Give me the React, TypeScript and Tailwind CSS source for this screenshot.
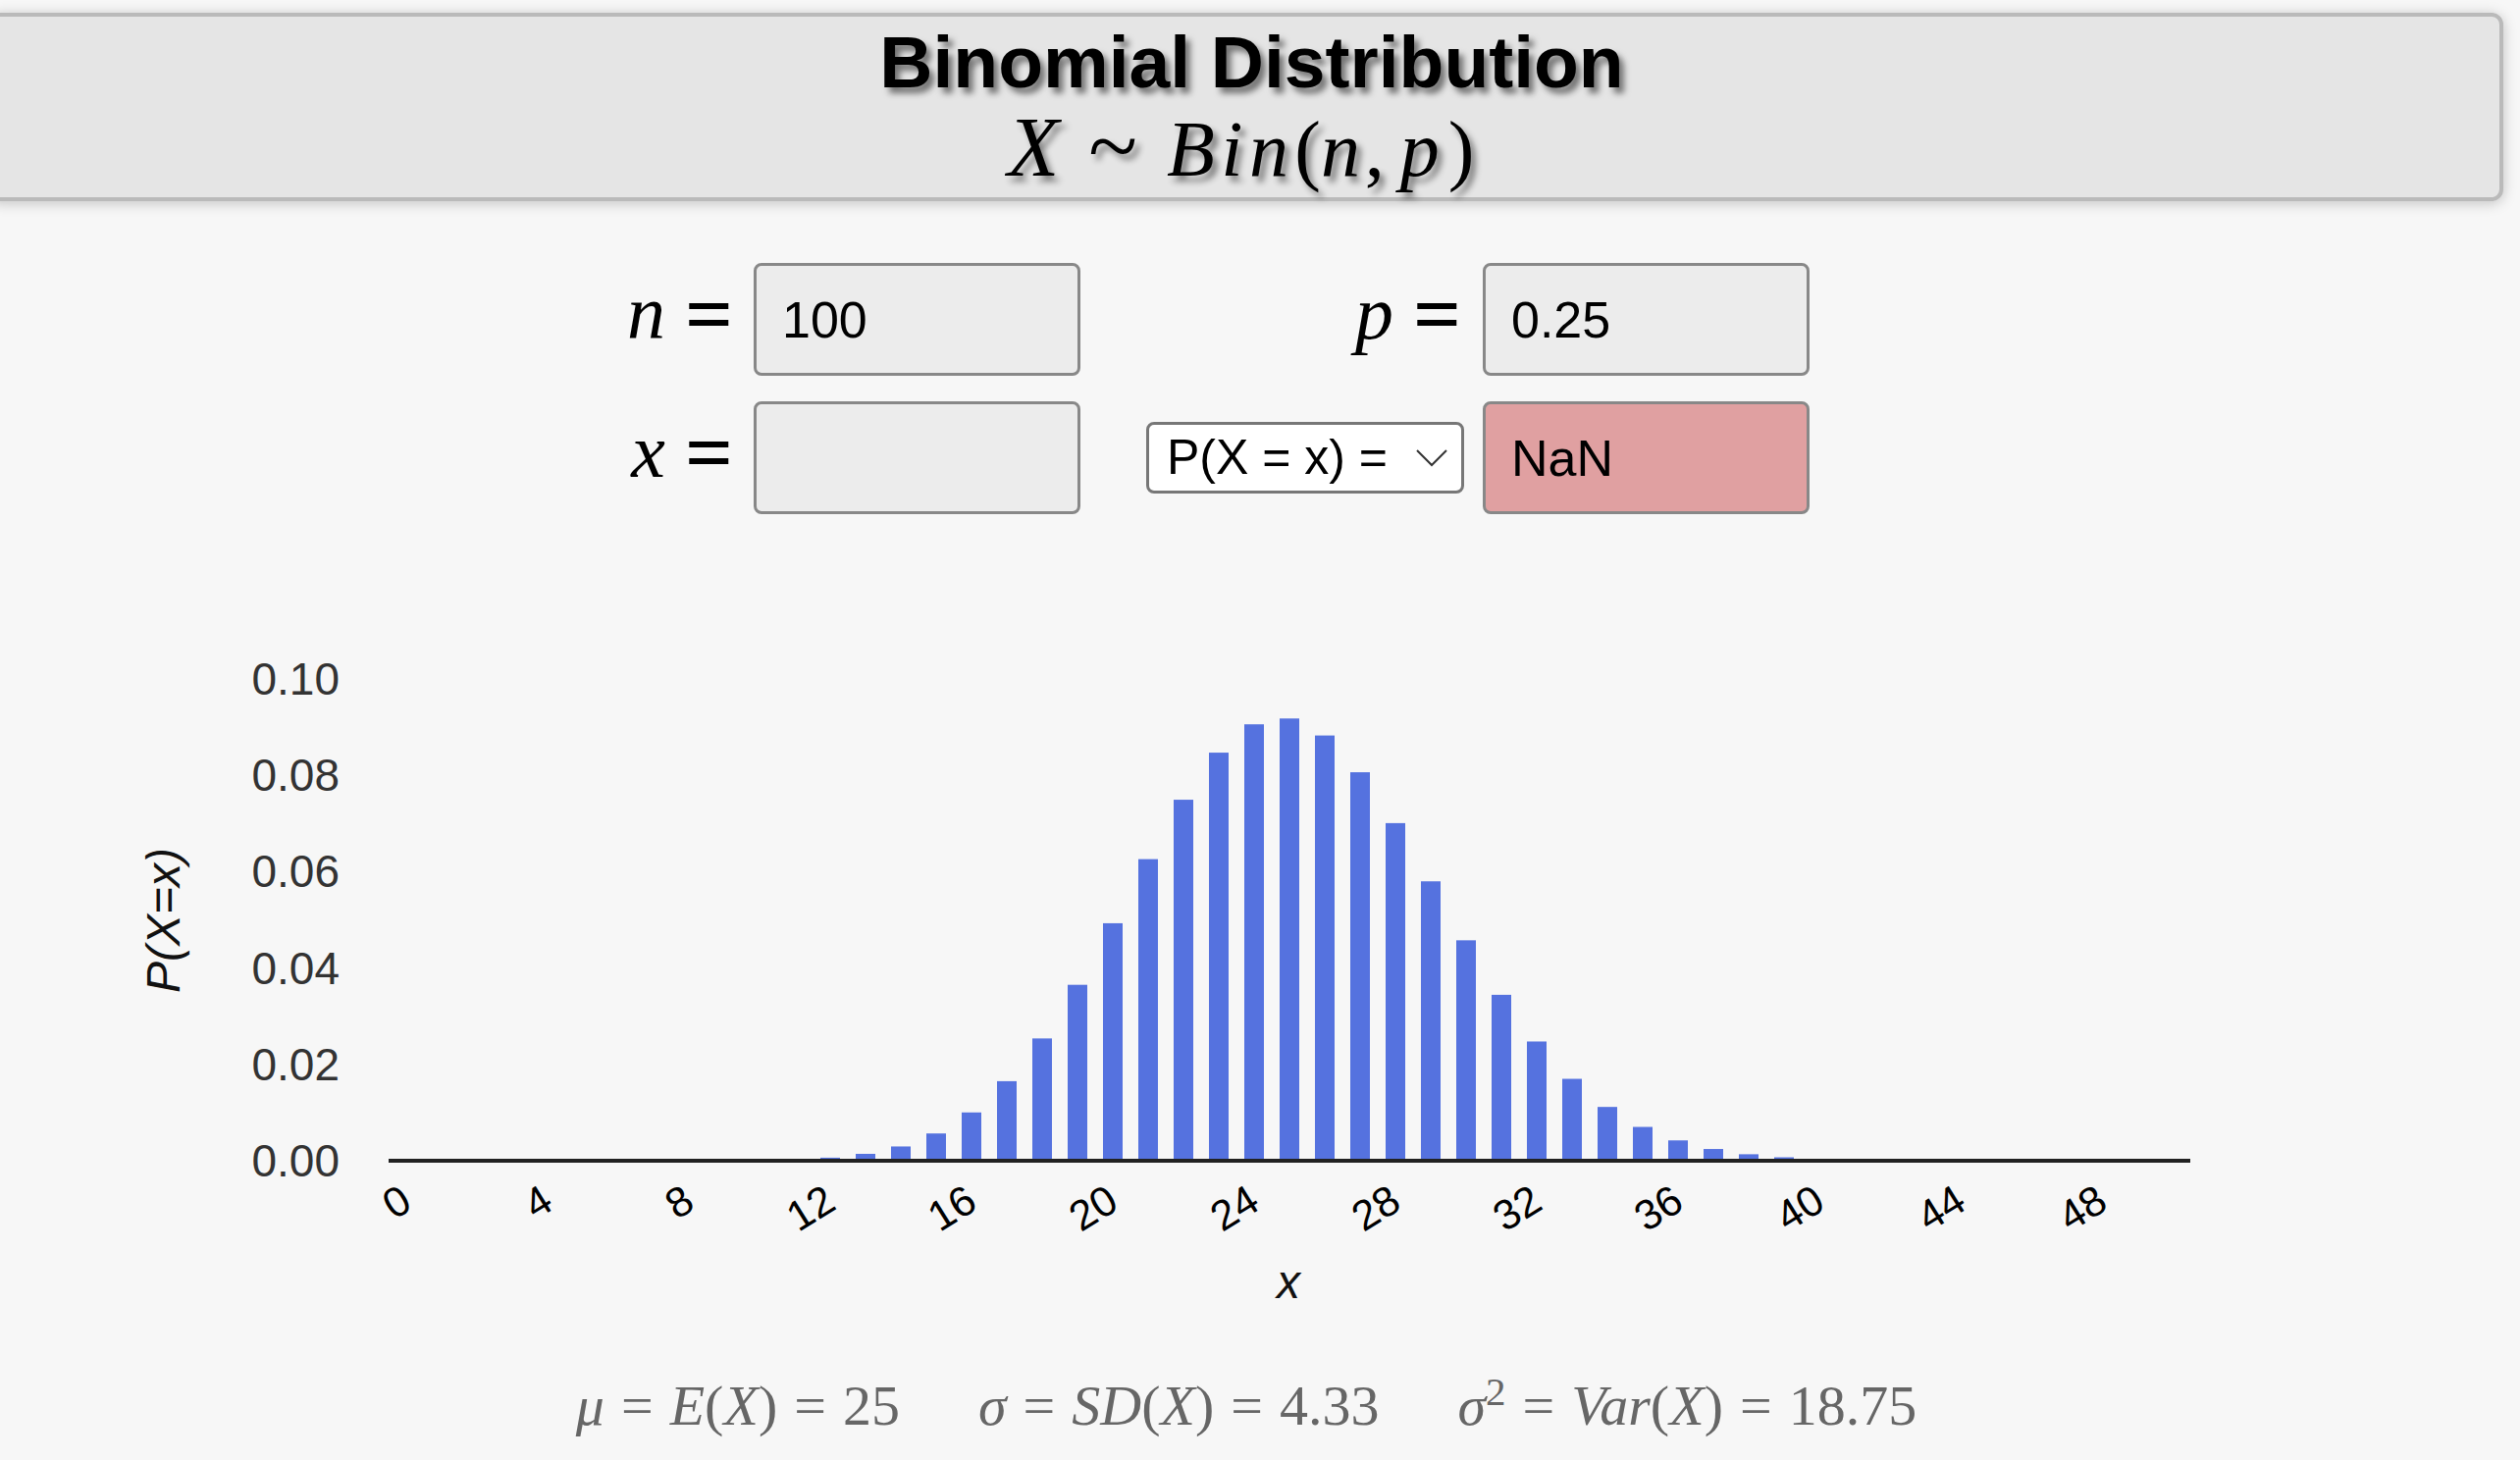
import React from 'react';

const N = 100;
const P = 0.25;

// binomial pmf for the visible x range 0..50
const pmf: number[] = (() => {
  const out: number[] = [];
  let v = Math.pow(1 - P, N);
  for (let k = 0; k <= 50; k++) {
    out.push(v);
    v = v * ((N - k) / (k + 1)) * (P / (1 - P));
  }
  return out;
})();

const mean = N * P;
const variance = N * P * (1 - P);
const sd = Math.sqrt(variance);

// chart geometry (svg coords, svg starts at page y=600)
const X0 = 396;
const BAND = 36;
const BAR_W = 20;
const AXIS_Y = 582;
const Y_SCALE = 4910;

const Eq = () => <span className="mx-[17px] not-italic">=</span>;

const MathLabel = ({ v }: { v: string }) => (
  <div className="flex items-center justify-end pb-[14px] font-['Liberation_Serif',serif] text-[78px] text-black">
    <span className="italic">{v}</span>
    <span className="relative top-[2px] ml-[20px] text-[86px] font-bold">=</span>
  </div>
);

const Field = ({ value, error }: { value: string; error?: boolean }) => (
  <input
    readOnly
    value={value}
    className={`w-[333px] h-[115px] rounded-[8px] border-[3px] border-[#888] pl-[26px] font-['Liberation_Sans',sans-serif] text-[52px] text-black outline-none ${
      error ? 'bg-[#e0a0a1]' : 'bg-[#ececec]'
    }`}
  />
);

const BinomialChart = () => {
  const yTicks = [0, 0.02, 0.04, 0.06, 0.08, 0.1];
  const xTicks = Array.from({ length: 13 }, (_, i) => i * 4);
  return (
    <svg width={2568} height={740} viewBox="0 0 2568 740" className="block mt-[77px]">
      {/* y axis labels */}
      {yTicks.map(t => (
        <text
          key={t}
          x={346}
          y={AXIS_Y - t * Y_SCALE + 16}
          textAnchor="end"
          fontSize={46}
          fill="#333"
          fontFamily="Liberation Sans, sans-serif"
        >
          {t.toFixed(2)}
        </text>
      ))}

      {/* bars */}
      {pmf.map((v, k) => {
        const h = v * Y_SCALE;
        return (
          <rect
            key={k}
            x={X0 + k * BAND + (BAND - BAR_W) / 2}
            y={AXIS_Y - h}
            width={BAR_W}
            height={h}
            fill="#5572df"
          />
        );
      })}

      <line x1={X0} y1={AXIS_Y} x2={2232} y2={AXIS_Y} stroke="#222" strokeWidth={4} />

      {/* x axis labels, rotated */}
      {xTicks.map(t => (
        <text
          key={t}
          transform={`translate(${X0 + t * BAND + BAND / 2 + 8}, 630) rotate(-32)`}
          textAnchor="end"
          fontSize={43}
          fill="#000"
          fontFamily="Liberation Sans, sans-serif"
        >
          {t}
        </text>
      ))}

      <text x={1313} y={722} textAnchor="middle" fontSize={48} fontStyle="italic" fill="#111" fontFamily="Liberation Sans, sans-serif">
        x
      </text>
      <text
        transform="translate(183, 337) rotate(-90)"
        textAnchor="middle"
        fontSize={48}
        fontStyle="italic"
        fill="#111"
        fontFamily="Liberation Sans, sans-serif"
      >
        P(X=x)
      </text>
    </svg>
  );
};

export default function App() {
  return (
    <div className="h-[1488px] overflow-hidden bg-[#f7f7f7] pt-[13px]">
      {/* Header */}
      <header className="-ml-[12px] w-[2563px] h-[192px] rounded-[12px] border-4 border-[#bababa] bg-[#e5e5e5] shadow-[0_2px_14px_rgba(0,0,0,0.22)] pl-[12px] pt-[4px] flex flex-col items-center">
        <h1 className="font-['Liberation_Sans',sans-serif] font-bold text-[75px] leading-[85px] text-black [text-shadow:5px_6px_6px_rgba(0,0,0,0.5)]">
          Binomial Distribution
        </h1>
        <div className="pr-[22px] font-['Liberation_Serif',serif] text-[80px] leading-[85px] text-black [text-shadow:5px_6px_6px_rgba(0,0,0,0.45)]">
          <span className="italic text-[86px]">X</span>
          <span className="mx-[30px] text-[92px]">~</span>
          <span className="italic tracking-[0.08em]">Bin</span>
          <span>(</span>
          <span className="italic tracking-[0.06em]">n</span>
          <span>,</span>
          <span className="ml-[16px] italic tracking-[0.06em]">p</span>
          <span className="ml-[4px]">)</span>
        </div>
      </header>

      {/* Parameters */}
      <div className="ml-[567px] mt-[63px] grid grid-cols-[201px_333px_410px_333px] grid-rows-[115px_115px] gap-y-[26px]">
        <div className="pr-[21px] flex items-center justify-end">
          <MathLabel v="n" />
        </div>
        <Field value="100" />
        <div className="pr-[22px] flex items-center justify-end">
          <MathLabel v="p" />
        </div>
        <Field value="0.25" />

        <div className="pr-[21px] flex items-center justify-end">
          <MathLabel v="x" />
        </div>
        <Field value="" />
        <div className="pr-[19px] flex items-center justify-end">
          <div className="w-[324px] h-[73px] rounded-[8px] border-[3px] border-[#777] bg-white pl-[18px] pr-[14px] flex items-center justify-between font-['Liberation_Sans',sans-serif] text-[50px] text-black">
            <span>P(X = x) =</span>
            <svg width="32" height="18" viewBox="0 0 32 18" fill="none">
              <path d="M1 1 L16 16 L31 1" stroke="#333" strokeWidth="2" />
            </svg>
          </div>
        </div>
        <Field value="NaN" error />
      </div>

      <BinomialChart />

      {/* Summary */}
      <div className="mt-[58px] pr-[28px] flex justify-center gap-[80px] font-['Liberation_Serif',serif] text-[58px] leading-[67px] text-[#666]">
        <span>
          <i>μ</i>
          <Eq />
          <i>E</i>(<i>X</i>)
          <Eq />
          {mean}
        </span>
        <span>
          <i>σ</i>
          <Eq />
          <i>SD</i>(<i>X</i>)
          <Eq />
          {sd.toFixed(2)}
        </span>
        <span>
          <i>σ</i>
          <sup className="text-[41px]">2</sup>
          <Eq />
          <i>Var</i>(<i>X</i>)
          <Eq />
          {variance.toFixed(2)}
        </span>
      </div>
    </div>
  );
}
